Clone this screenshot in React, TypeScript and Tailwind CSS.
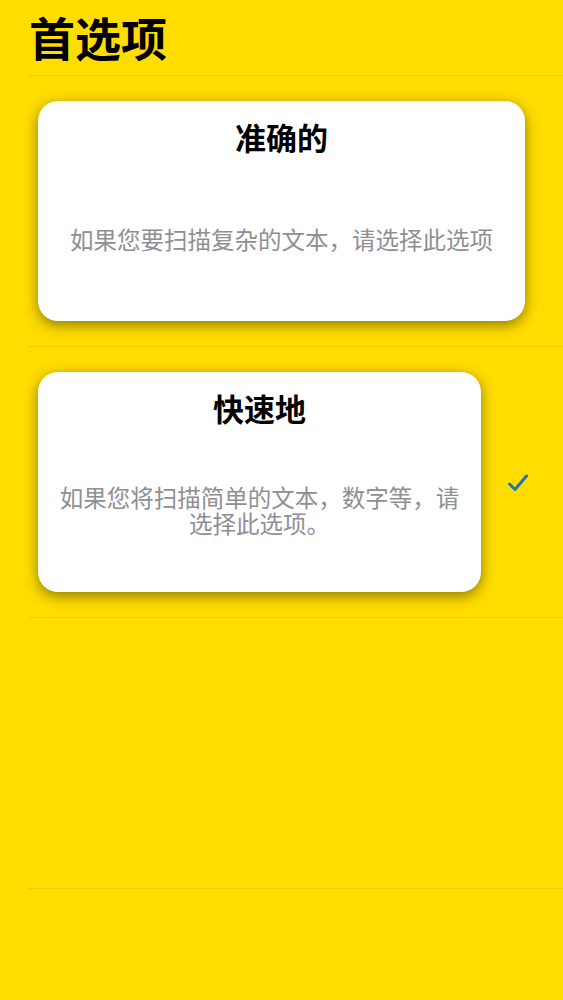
import React from "react";

function Check() {
  return (
    <svg width="22" height="20" viewBox="0 0 22 20" fill="none" className="mt-[3px]">
      <polyline
        points="2.5,11 8,16.5 19.5,3"
        stroke="#1f78b4"
        strokeWidth="3"
        strokeLinecap="round"
        strokeLinejoin="round"
      />
    </svg>
  );
}

function Card({ title, desc }: { title: string; desc: string }) {
  return (
    <div className="flex h-[220px] flex-1 flex-col rounded-[20px] bg-white px-5 pt-[16px] shadow-[0_4px_14px_rgba(0,0,0,0.45)]">
      <div className="text-center text-[31px] font-bold leading-[40px] text-black">{title}</div>
      <div className="flex flex-1 items-center justify-center text-center text-[23.5px] leading-[26px] text-[#8e8e93]">
        {desc}
      </div>
    </div>
  );
}

export default function App() {
  return (
    <div className="min-h-[1000px] bg-[#FFDD00] font-['Noto_Sans_CJK_SC','Noto_Sans',sans-serif]">
      <div className="flex h-[75px] items-center pb-[4px] pl-[29px] text-[46px] font-bold leading-none text-black">
        首选项
      </div>
      <div className="ml-[28px]">
        <div className="box-border flex h-[271px] items-center border-t border-[#EECD00] pb-[1px] pl-[10px] pr-[38px]">
          <Card title="准确的" desc="如果您要扫描复杂的文本，请选择此选项" />
        </div>
        <div className="box-border flex h-[271px] items-center border-t border-[#EECD00] pb-[1px] pl-[10px]">
          <Card title="快速地" desc="如果您将扫描简单的文本，数字等，请选择此选项。" />
          <div className="flex w-[82px] items-center justify-center pr-[8px]">
            <Check />
          </div>
        </div>
        <div className="box-border h-[271px] border-t border-[#EECD00]" />
        <div className="border-t border-[#EECD00]" />
      </div>
    </div>
  );
}
